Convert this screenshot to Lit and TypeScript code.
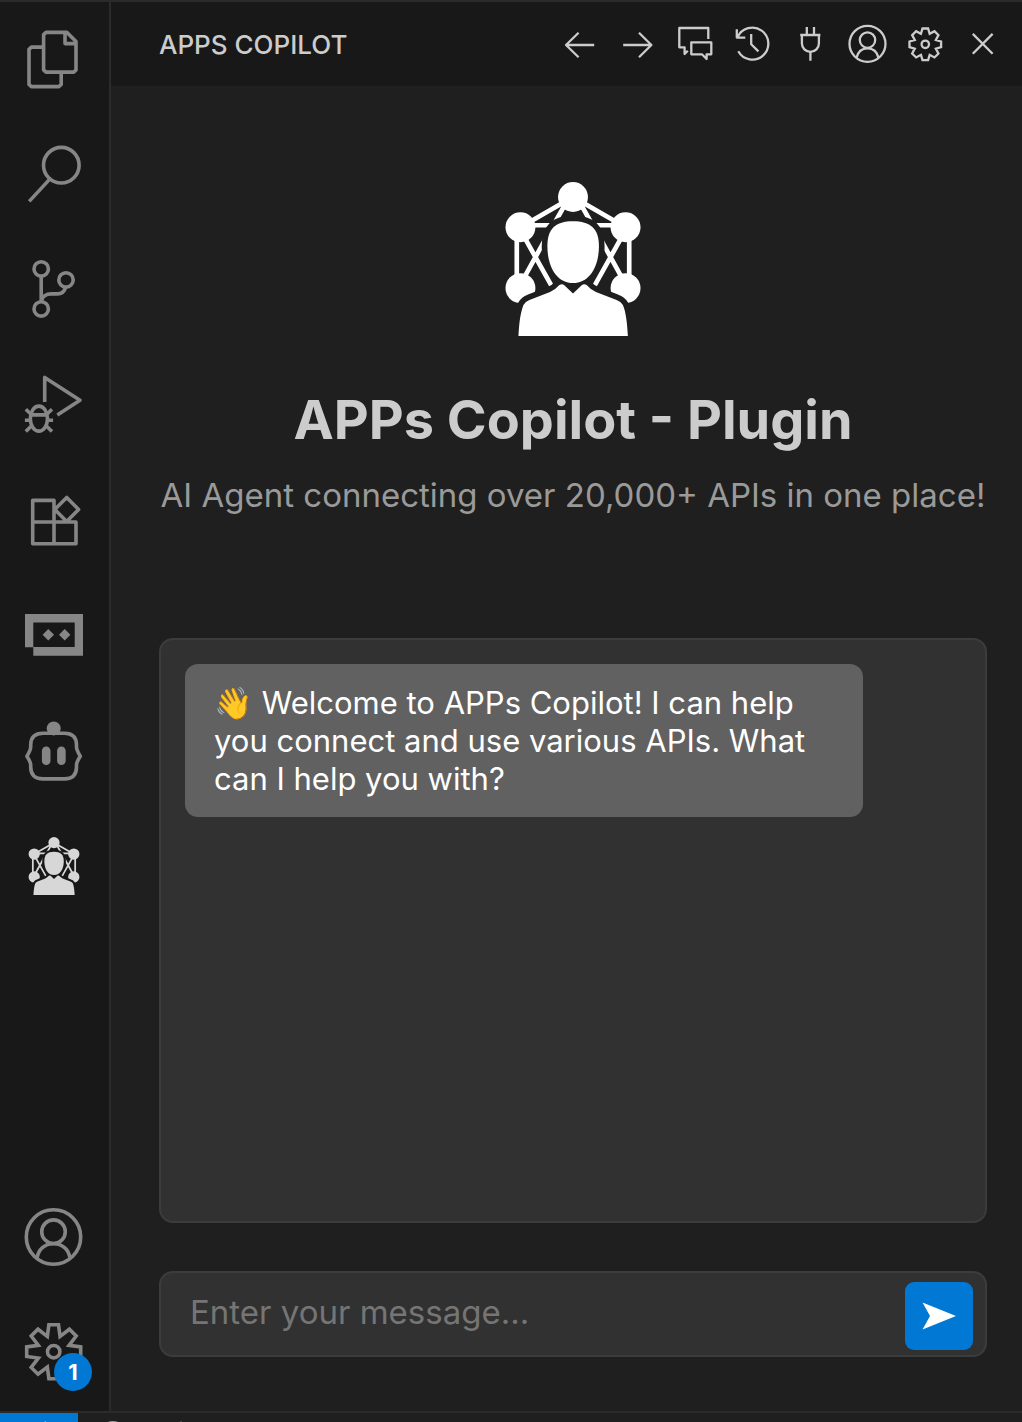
import { LitElement, html, svg, css } from "lit";
import { customElement, state } from "lit/decorators.js";

/** Outline of an eight-toothed gear centred on (c, c). */
const gearPath = (c: number, tip: number, half: number, valley: number) => {
  const points: string[] = [];
  for (let i = 0; i < 8; i++) {
    const a = (i * Math.PI) / 4;
    const spin = (x: number, y: number) =>
      `${(c + x * Math.cos(a) - y * Math.sin(a)).toFixed(2)} ${(c + x * Math.sin(a) + y * Math.cos(a)).toFixed(2)}`;
    points.push(spin(-half, -tip), spin(half, -tip));
    points.push(spin(valley * Math.sin(Math.PI / 8), -valley * Math.cos(Math.PI / 8)));
  }
  return `M${points.join("L")}Z`;
};

/* Large icons, drawn on a 58 x 58 grid */
const files = svg`<path d="M21 1.4H42L51 10.6V38.9L48.9 41.1H21L18.6 38.9V3.6Z M40 1.4V12.6H51 M18.6 16.1H6.4L4 18.3V53.4L6.4 55.6H34L36.2 53.4V41.1"/>`;
const search = svg`<circle cx="36.3" cy="19.2" r="17.8"/><path d="M24.3 33.6L4.2 55.4"/>`;
const branch = svg`<circle cx="16.2" cy="7.9" r="7.2"/><circle cx="41" cy="18.9" r="7.2"/><circle cx="16.2" cy="47.9" r="7.2"/>
  <path d="M16.2 15V40.7M40.7 26C39.7 30 37.2 32.9 32.2 32.9H26.2C21.2 32.9 17.2 35.5 16.6 40"/>`;
const debug = svg`<path d="M19.7 25.9V1.4L55 24.2L32.3 39"/><ellipse cx="13.9" cy="42.6" rx="8.6" ry="12.5"/>
  <path d="M5.6 38.9H22.3M-0.1 44.2H5.3M22.5 44.2H28.1M0.8 33.3L6 38.3M27 33.3L21.8 38.3M0.8 55.5L6.4 49.9M27 55.5L21.4 49.9"/>`;
const extensions = svg`<path d="M7.7 8.4H29V51.7H7.7ZM7.7 30H51V51.7H29M41.7 5.4L53.6 17.4L41.7 29.4L29.8 17.4Z"/>`;
const terminalBot = svg`<path class="solid" fill-rule="evenodd" d="M0 7.1H58V48.8H8.3V40.3H0ZM8.3 15.4V40.1H49.7V15.4ZM23.3 22L29 27.8L23.3 33.6L17.6 27.8ZM39.7 22L45.4 27.8L39.7 33.6L34 27.8Z"/>`;
const braceBot = svg`<path d="M18 11.2H39.5Q51.5 11.2 51.5 23V25Q51.5 28 55.3 34.2Q51.5 40 51.5 43V45Q51.5 56.9 39.5 56.9H18Q5.7 56.9 5.7 45V43Q5.7 40 1.9 34.2Q5.7 28 5.7 25V23Q5.7 11.2 18 11.2Z"/>
  <g class="solid"><circle cx="28.7" cy="6.4" r="7"/><rect x="16.9" y="24.6" width="8.6" height="18.4" rx="4.3"/><rect x="32.1" y="24.6" width="8.6" height="18.4" rx="4.3"/></g>`;
const account = svg`<circle cx="28.5" cy="29" r="27.2"/><circle cx="28.5" cy="23.7" r="11.8"/><path d="M12 50C13.5 41.5 19.5 35.8 28.5 35.8C37.5 35.8 43.5 41.5 45 50"/>`;
const gear = svg`<path class="miter" d="${gearPath(28.7, 27, 4.8, 16.6)}"/><circle cx="28.7" cy="28.7" r="6.2"/>`;

/* Small icons, drawn on a 38 x 38 grid */
const back = svg`<path d="M33.2 20H5M17.6 7.7L5 20L17.6 32.3"/>`;
const forward = svg`<path d="M5.2 20H33.4M21 7.7L33.4 20L21 32.3"/>`;
const chat = svg`<path d="M32.3 14V3H3.3V22.3H8.6V29L11.8 25.7M15.3 17.3H35.3V29.3H30.6V34L25.9 29.3H15.3Z"/>`;
const history = svg`<path d="M5.3 26.3A16 16 0 1 0 4.6 12.4M3.8 4.3V12.6H12.3M18.2 9V19.2L25.4 26.4"/>`;
const plug = svg`<path d="M15.8 2V10M23 2V10M9.2 10H29.4M10.9 10V18.4A8.5 8.5 0 0 0 27.9 18.4V10M19.4 27V35.8"/>`;
const smallAccount = svg`<circle cx="19.5" cy="18.8" r="18"/><circle cx="19.5" cy="15.1" r="7.7"/><path d="M8.4 33C9.8 27.2 13.8 23.4 19.5 23.4C25.2 23.4 29.2 27.2 30.6 33"/>`;
const smallGear = svg`<path class="miter" d="${gearPath(19.3, 15.8, 2.8, 11.4)}"/><circle cx="19.3" cy="19.3" r="3.7"/>`;
const close = svg`<path d="M9.8 8.9L29.6 28.7M29.6 8.9L9.8 28.7"/>`;

const shoulders =
  "M85 498C87 455 92 425 100 405Q106 394 118 390L180 366Q195 360 208 345Q216 340 222 345L249 370L276 345Q282 340 290 345Q303 360 318 366L380 390Q393 394 399 405C408 425 412 460 414 498Z";
const head =
  "M249 153C301 153 327 175 327 228C327 288 299 339 249 339C199 339 172 288 172 228C172 175 197 153 249 153Z";

const agentLogo = () => html`<svg class="agent" viewBox="45 35 408 463" aria-hidden="true">
  <g class="links">
    <path d="M91 171L249 80L407 171M80 171V354M418 171V354M91 165H190M407 165H308M249 60L190 165M249 60L308 165" />
    <path d="M91 180L190 357M407 180L308 357M168 203L98 330M330 203L400 330" />
  </g>
  <g>
    <circle cx="249" cy="80" r="45" /><circle cx="91" cy="171" r="45" /><circle cx="407" cy="171" r="45" />
    <circle cx="91" cy="354" r="45" /><circle cx="407" cy="354" r="45" />
  </g>
  <path class="halo" d="${shoulders}" /><path class="halo" d="${head}" />
  <path d="${shoulders}" /><path d="${head}" />
</svg>`;

const activities = [
  { label: "Explorer", icon: files },
  { label: "Search", icon: search },
  { label: "Source Control", icon: branch },
  { label: "Run and Debug", icon: debug },
  { label: "Extensions", icon: extensions },
  { label: "Terminal Assistant", icon: terminalBot },
  { label: "Code Assistant", icon: braceBot },
];

const actions = [
  { label: "Back", icon: back },
  { label: "Forward", icon: forward },
  { label: "Chats", icon: chat },
  { label: "History", icon: history },
  { label: "Connections", icon: plug },
  { label: "Account", icon: smallAccount },
  { label: "Settings", icon: smallGear },
  { label: "Close", icon: close },
];

const shared = css`
  * { box-sizing: border-box; }
  button {
    display: grid;
    place-items: center;
    margin: 0;
    padding: 0;
    border: 0;
    background: none;
    color: inherit;
    font: inherit;
    cursor: pointer;
  }
  svg { display: block; overflow: visible; }
  .icon { fill: none; stroke: currentColor; stroke-linejoin: round; }
  .icon .miter { stroke-linejoin: miter; }
  .icon .solid { fill: currentColor; stroke: none; }
  .agent { fill: currentColor; overflow: hidden; }
  .agent .links { fill: none; stroke: currentColor; stroke-width: 14; }
  .agent .halo { fill: var(--surface); stroke: var(--surface); stroke-width: 34; }
`;

@customElement("activity-bar")
class ActivityBar extends LitElement {
  static styles = [
    shared,
    css`
      :host { display: block; --surface: #181818; }
      nav {
        display: flex;
        flex-direction: column;
        justify-content: space-between;
        width: 111px;
        height: 100%;
        padding-right: 1px;
        border-right: 2px solid #2b2b2b;
        background: #181818;
        color: #868686;
      }
      .views { display: grid; grid-template-rows: repeat(8, 1fr); height: 922px; }
      .global { display: grid; grid-auto-rows: 115px; padding-bottom: 2px; }
      button { width: 100%; }
      .icon { width: 58px; height: 58px; stroke-width: 3.6; }
      .active { color: #d7d7d7; }
      .agent { width: 52px; height: 58px; }
      .stack { position: relative; }
      .badge {
        position: absolute;
        left: 29px;
        top: 30px;
        width: 38px;
        height: 38px;
        border-radius: 50%;
        background: #0078d4;
        color: #fff;
        font-size: 22px;
        font-weight: 700;
        line-height: 38px;
        text-align: center;
      }
    `,
  ];

  render() {
    return html`<nav aria-label="Views">
      <div class="views">
        ${activities.map(
          (a) => html`<button aria-label=${a.label}><svg class="icon" viewBox="0 0 58 58">${a.icon}</svg></button>`,
        )}
        <button class="active" aria-label="APPs Copilot">${agentLogo()}</button>
      </div>
      <div class="global">
        <button aria-label="Accounts"><svg class="icon" viewBox="0 0 58 58">${account}</svg></button>
        <button aria-label="Manage">
          <span class="stack"><svg class="icon" viewBox="0 0 58 58">${gear}</svg><span class="badge">1</span></span>
        </button>
      </div>
    </nav>`;
  }
}

@customElement("copilot-panel")
class CopilotPanel extends LitElement {
  static styles = [
    shared,
    css`
      :host { display: flex; flex-direction: column; min-width: 0; --surface: #1f1f1f; }
      header {
        display: flex;
        align-items: center;
        justify-content: space-between;
        height: 84px;
        padding: 0 11px 0 48px;
        background: #181818;
        color: #ccc;
      }
      h2 { margin: 0; padding-top: 2px; font-size: 26px; font-weight: 500; line-height: 32px; white-space: nowrap; }
      .actions { display: grid; grid-template-columns: repeat(8, 1fr); width: 460px; }
      .icon { width: 38px; height: 38px; stroke-width: 2.3; }
      main {
        flex: 1;
        display: flex;
        flex-direction: column;
        min-height: 0;
        padding: 96px 35px 54px 48px;
        background: #1f1f1f;
      }
      .hero { display: flex; flex-direction: column; align-items: center; text-align: center; }
      .agent { width: 136px; height: 154px; color: #fff; }
      h1 { margin: 48px 0 0; color: #ccc; font-size: 54px; font-weight: 700; line-height: 72px; white-space: nowrap; }
      .tagline { margin: 15px 0 0; color: #9a9a9a; font-size: 33px; line-height: 48px; white-space: nowrap; }
      .log {
        flex: 1;
        min-height: 0;
        margin-top: 119px;
        padding: 24px;
        border: 2px solid #3c3c3c;
        border-radius: 14px;
        background: #313131;
      }
      .message {
        margin: 0 98px 0 0;
        padding: 20px 29px 19px;
        border-radius: 13px;
        background: #616161;
        color: #fff;
        font-size: 31px;
        line-height: 38px;
      }
      form {
        display: flex;
        margin-top: 48px;
        padding: 9px 12px 5px 29px;
        border: 2px solid #3c3c3c;
        border-radius: 14px;
        background: #313131;
      }
      input {
        flex: 1;
        min-width: 0;
        height: 60px;
        padding: 0;
        border: 0;
        outline: 0;
        background: none;
        color: #ccc;
        font: inherit;
        font-size: 33px;
      }
      input::placeholder { color: #757575; opacity: 1; }
      .send { width: 68px; height: 68px; border-radius: 9px; background: #0078d4; color: #fff; }
      .send svg { width: 34px; height: 28px; fill: currentColor; }
    `,
  ];

  @state() private draft = "";

  render() {
    return html`<header>
        <h2>APPS COPILOT</h2>
        <div class="actions">
          ${actions.map(
            (a) => html`<button aria-label=${a.label}><svg class="icon" viewBox="0 0 38 38">${a.icon}</svg></button>`,
          )}
        </div>
      </header>
      <main>
        <div class="hero">
          ${agentLogo()}
          <h1>APPs Copilot - Plugin</h1>
          <p class="tagline">AI Agent connecting over 20,000+ APIs in one place!</p>
        </div>
        <section class="log" aria-label="Conversation">
          <p class="message">👋 Welcome to APPs Copilot! I can help you connect and use various APIs. What can I help you with?</p>
        </section>
        <form @submit=${(e: Event) => e.preventDefault()}>
          <input
            type="text"
            aria-label="Message"
            placeholder="Enter your message..."
            .value=${this.draft}
            @input=${(e: InputEvent) => (this.draft = (e.target as HTMLInputElement).value)}
          />
          <button class="send" aria-label="Send"><svg viewBox="0 0 34 28"><path d="M0.5 0.5L34 14L0.5 27.5L8 14Z" /></svg></button>
        </form>
      </main>`;
  }
}

@customElement("app-root")
class AppRoot extends LitElement {
  static styles = css`
    :host {
      display: flex;
      flex-direction: column;
      box-sizing: border-box;
      height: 100vh;
      overflow: hidden;
      border-top: 2px solid #2b2b2b;
      background: #181818;
      font-family: Inter, "Liberation Sans", sans-serif;
    }
    .workbench { flex: 1; display: flex; min-height: 0; }
    copilot-panel { flex: 1; }
    footer { display: flex; height: 9px; overflow: hidden; border-top: 2px solid #2b2b2b; background: #1f1f1f; color: #9d9d9d; }
    .remote { width: 78px; background: #0078d4; color: #fff; }
    .problems { padding-left: 22px; }
    svg { display: block; fill: none; stroke: currentColor; stroke-width: 2; }
  `;

  render() {
    return html`<div class="workbench">
        <activity-bar></activity-bar>
        <copilot-panel></copilot-panel>
      </div>
      <footer>
        <div class="remote"><svg width="78" height="44" viewBox="0 0 78 44"><path d="M46 9L38 17L46 25M32 17L40 25L32 33" /></svg></div>
        <div class="problems"><svg width="110" height="44" viewBox="0 0 110 44"><circle cx="13" cy="21" r="12" /><path d="M81 10L94 33H68Z" /></svg></div>
      </footer>`;
  }
}
